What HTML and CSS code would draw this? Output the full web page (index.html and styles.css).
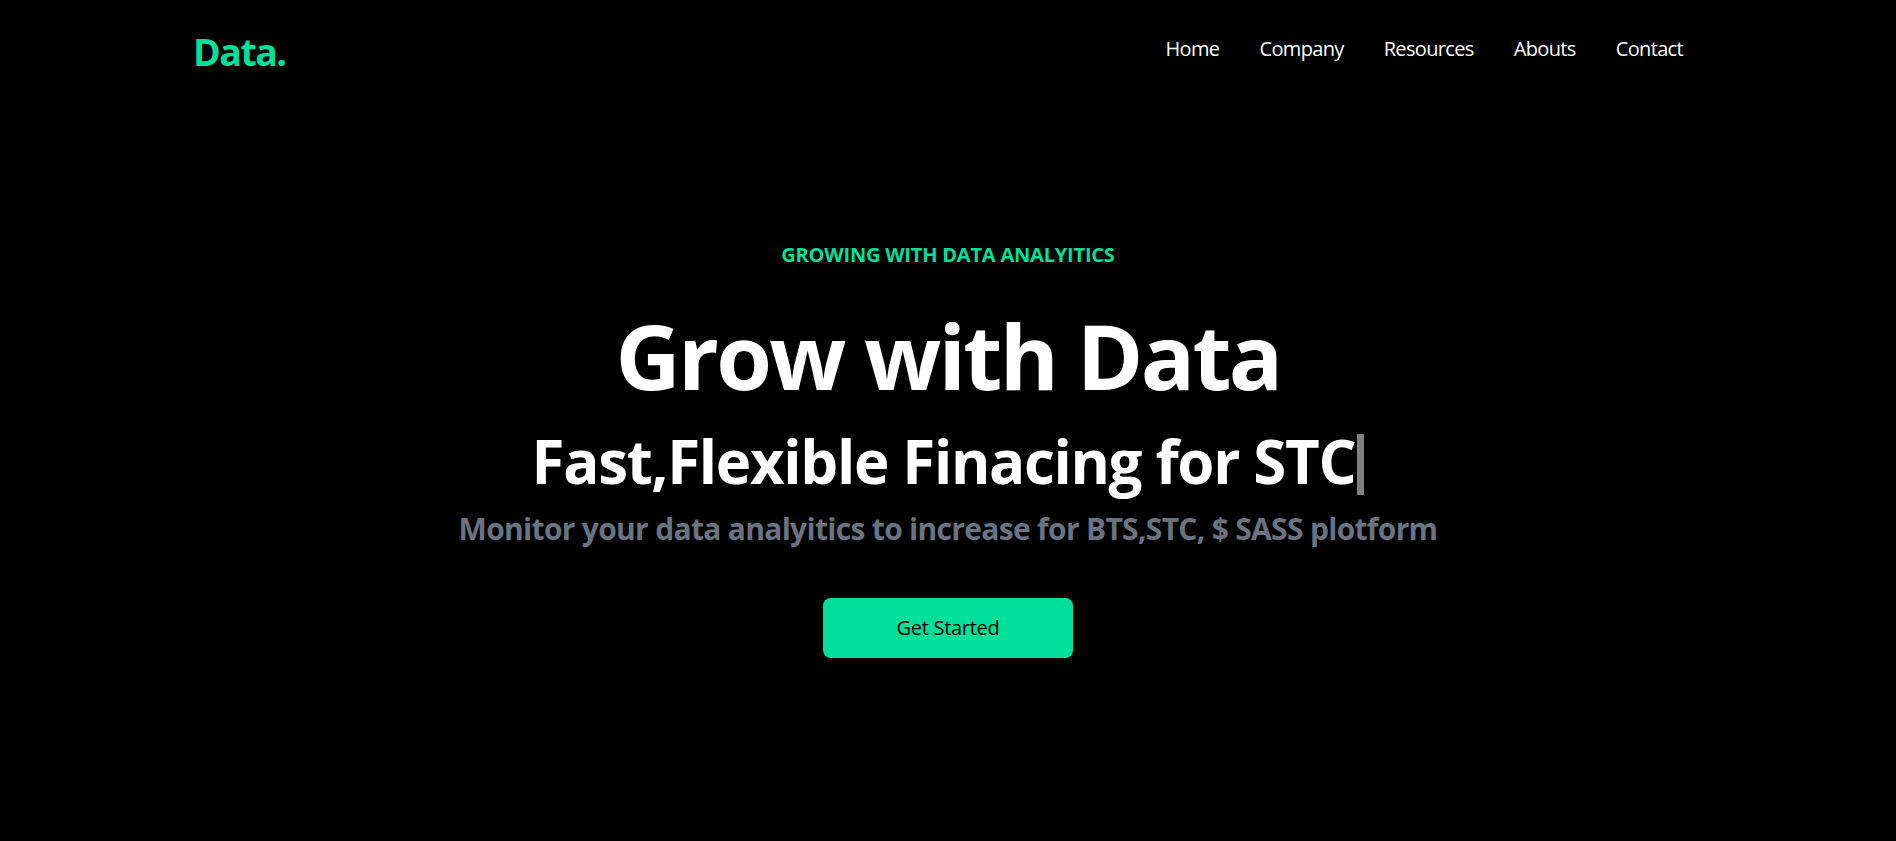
FILE: index.html
```html
<!DOCTYPE html>
<html lang="en">
<head>
<meta charset="utf-8">
<title>Data.</title>
<link rel="stylesheet" href="styles.css">
</head>
<body>
<header class="nav">
  <h1 class="logo">Data.</h1>
  <ul class="menu">
    <li class="menu-item">Home</li>
    <li class="menu-item">Company</li>
    <li class="menu-item">Resources</li>
    <li class="menu-item">Abouts</li>
    <li class="menu-item">Contact</li>
  </ul>
</header>
<main class="hero">
  <p class="eyebrow">GROWING WITH DATA ANALYITICS</p>
  <h1 class="title">Grow with Data</h1>
  <div class="tagline">
    <p class="tagline-text">Fast,Flexible Finacing for STC</p><span class="cursor"></span>
  </div>
  <p class="sub">Monitor your data analyitics to increase for BTS,STC, $ SASS plotform</p>
  <button class="cta">Get Started</button>
</main>
</body>
</html>
```

FILE: styles.css
```css
html, body {
  margin: 0;
  padding: 0;
  background: #000;
  color: #fff;
  font-family: "Open Sans", "Noto Sans", sans-serif;
}

.nav {
  box-sizing: border-box;
  max-width: 1550px;
  height: 96px;
  margin: 0 auto;
  padding: 0 20px;
  display: flex;
  justify-content: space-between;
  align-items: center;
}

.logo {
  margin: 6px 0 0;
  font-size: 37.5px;
  line-height: 45px;
  font-weight: 700;
  color: #00df9a;
  letter-spacing: -1.5px;
}

.menu {
  display: flex;
  list-style: none;
  margin: 2px 0 0;
  padding: 0;
}

.menu-item {
  padding: 20px;
  font-size: 20px;
  line-height: 30px;
  letter-spacing: -0.65px;
}

.hero {
  max-width: 1000px;
  margin: 0 auto;
  padding-top: 134px;
  display: flex;
  flex-direction: column;
  text-align: center;
}

.eyebrow {
  margin: 0;
  padding: 10px;
  font-size: 20px;
  line-height: 30px;
  font-weight: 700;
  color: #00df9a;
  letter-spacing: -0.2px;
}

.title {
  margin: 0;
  padding: 30px 0 31px;
  font-size: 90px;
  line-height: 90px;
  font-weight: 700;
  letter-spacing: -0.03em;
}

.tagline {
  display: flex;
  justify-content: center;
  align-items: center;
  height: 60px;
  padding-bottom: 18px;
}

.tagline-text {
  margin: 0;
  font-size: 60px;
  line-height: 60px;
  font-weight: 700;
  letter-spacing: -0.022em;
}

.cursor {
  display: inline-block;
  width: 7px;
  height: 61px;
  margin: 7px 0 0 2px;
  background: #808080;
}

.sub {
  margin: 0;
  font-size: 30px;
  line-height: 40px;
  font-weight: 700;
  color: #6b7280;
  letter-spacing: -0.023em;
  white-space: nowrap;
}

.cta {
  width: 250px;
  margin: 49px auto 30px;
  padding: 15px 0;
  border: none;
  border-radius: 7.5px;
  background: #00df9a;
  color: #000;
  font-family: inherit;
  font-size: 20px;
  line-height: 30px;
  font-weight: 500;
  letter-spacing: -0.3px;
}
```
